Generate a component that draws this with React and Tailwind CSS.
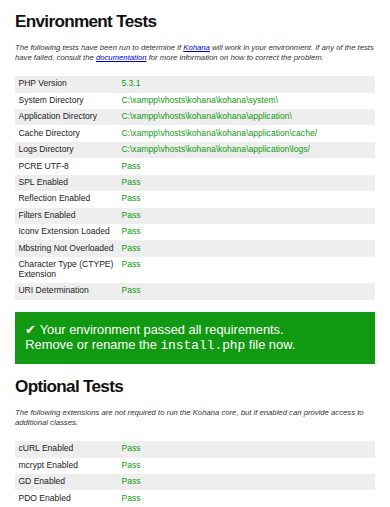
const envTests = [
  ["PHP Version", "5.3.1"],
  ["System Directory", "C:\\xampp\\vhosts\\kohana\\kohana\\system\\"],
  ["Application Directory", "C:\\xampp\\vhosts\\kohana\\kohana\\application\\"],
  ["Cache Directory", "C:\\xampp\\vhosts\\kohana\\kohana\\application\\cache/"],
  ["Logs Directory", "C:\\xampp\\vhosts\\kohana\\kohana\\application\\logs/"],
  ["PCRE UTF-8", "Pass"],
  ["SPL Enabled", "Pass"],
  ["Reflection Enabled", "Pass"],
  ["Filters Enabled", "Pass"],
  ["Iconv Extension Loaded", "Pass"],
  ["Mbstring Not Overloaded", "Pass"],
  ["Character Type (CTYPE) Extension", "Pass"],
  ["URI Determination", "Pass"],
];

const optionalTests = [
  ["cURL Enabled", "Pass"],
  ["mcrypt Enabled", "Pass"],
  ["GD Enabled", "Pass"],
  ["PDO Enabled", "Pass"],
];

function ResultTable({ rows }) {
  return (
    <table className="w-full text-left">
      <tbody>
        {rows.map(([name, value]) => (
          <tr key={name} className="odd:bg-[#eee]">
            <th className="w-[103px] px-[3.43px] py-[3.3px] text-left align-top font-normal text-[#222]">{name}</th>
            <td className="px-[3.43px] py-[3.3px] align-top text-[#191]">{value}</td>
          </tr>
        ))}
      </tbody>
    </table>
  );
}

function Heading({ children }) {
  return (
    <h1 className="my-[11.5px] text-[17.14px] font-bold leading-[1.15] tracking-[-0.04em] text-[#111]">
      {children}
    </h1>
  );
}

function Intro({ children }) {
  return (
    <p className="mb-[13.4px] text-[7.71px] leading-[1.3] italic text-[#333]">{children}</p>
  );
}

export default function App() {
  return (
    <div
      className="min-h-screen bg-white text-black"
      style={{ fontFamily: '"Liberation Sans", Arial, sans-serif' }}
    >
      <div className="mx-auto w-[360px] overflow-hidden text-[8.57px] leading-[1.15]">
        <Heading>Environment Tests</Heading>
        <Intro>
          The following tests have been run to determine if{" "}
          <a href="#" className="text-[#00c] underline">
            Kohana
          </a>{" "}
          will work in your environment. If any of the tests have failed, consult the{" "}
          <a href="#" className="text-[#00c] underline">
            documentation
          </a>{" "}
          for more information on how to correct the problem.
        </Intro>

        <ResultTable rows={envTests} />

        <p className="my-[12.86px] bg-[#191] p-[10.3px] text-[12.86px] leading-[1.15] text-white">
          ✔ Your environment passed all requirements.
          <br />
          Remove or rename the{" "}
          <code style={{ fontFamily: '"Liberation Mono", "Courier New", monospace' }}>install.php</code>{" "}
          file now.
        </p>

        <Heading>Optional Tests</Heading>
        <Intro>
          The following extensions are not required to run the Kohana core, but if enabled can
          provide access to additional classes.
        </Intro>

        <ResultTable rows={optionalTests} />
      </div>
    </div>
  );
}
